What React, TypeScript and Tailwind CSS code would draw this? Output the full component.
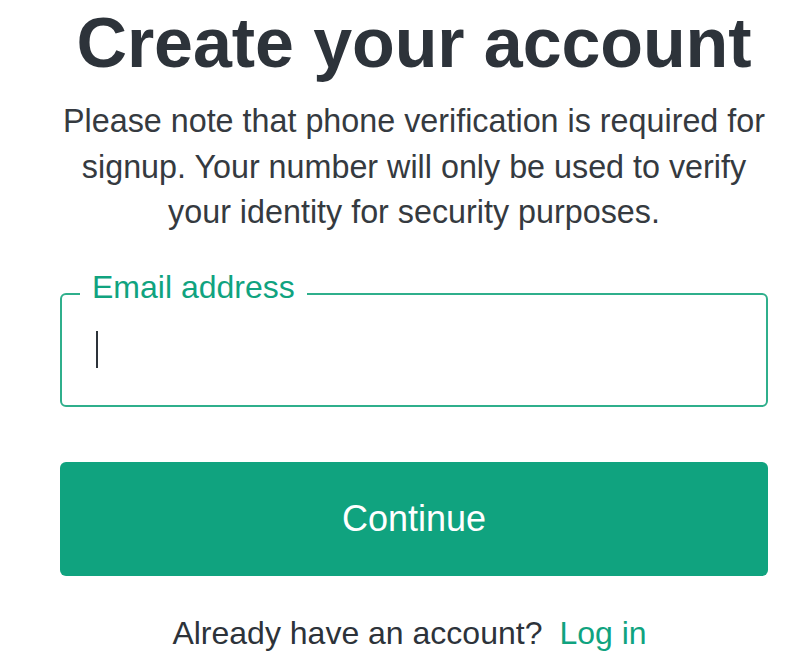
export default function App() {
    return (
        <div className="min-h-screen bg-white font-['Liberation_Sans',Arial,sans-serif] text-[#2d333a]">
            <div className="ml-[60px] flex w-[708px] flex-col items-center pt-[8px]">
                <h1 className="text-[70px] font-bold leading-[70px] tracking-[-0.1px]">Create your account</h1>

                <p className="mt-[21px] w-[714px] text-center text-[32.3px] leading-[45.5px] text-[#353a40]">
                    Please note that phone verification is required for signup. Your number will only be used to verify your identity for security purposes.
                </p>

                <div className="relative mt-[57px] flex h-[114px] w-full items-center rounded-[6px] border-2 border-[#2faf8c] pl-[34px]">
                    <span className="absolute left-[18px] top-[-26px] bg-white px-[12px] text-[32px] leading-[36px] text-[#10a37f]">
                        Email address
                    </span>
                    <span className="block h-[37px] w-[2px] bg-[#2d333a]" />
                </div>

                <button className="mt-[55px] flex h-[114px] w-full items-center justify-center rounded-[6px] bg-[#10a37f] text-[36px] text-white">
                    Continue
                </button>

                <div className="mt-[39px] flex items-baseline gap-[17px] pr-[9px] text-[32px] leading-[36px]">
                    <span>Already have an account?</span>
                    <a className="text-[#10a37f]">Log in</a>
                </div>
            </div>
        </div>
    );
}
